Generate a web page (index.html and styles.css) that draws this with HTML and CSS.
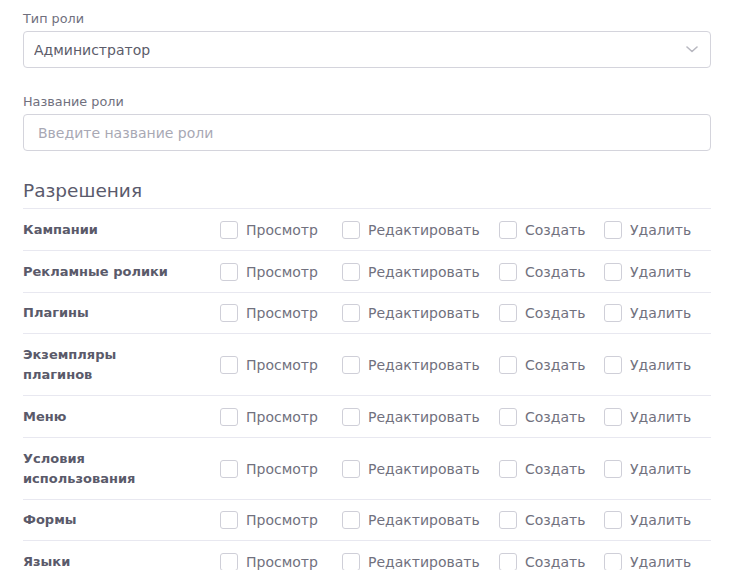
FILE: index.html
```html
<!DOCTYPE html>
<html lang="ru">
<head>
    <meta charset="UTF-8">
    <meta name="viewport" content="width=device-width, initial-scale=1.0">
    <title>Роль</title>
    <link rel="stylesheet" href="styles.css">
</head>
<body>
    <div class="container">
        <div class="form-group">
            <label for="roleType">Тип роли</label>
            <div class="select-wrap">
                <select id="roleType">
                    <option>Администратор</option>
                </select>
                <svg class="chevron" width="12" height="7" viewBox="0 0 12 7">
                    <path d="M1 1 L6 5.5 L11 1" fill="none" stroke="#b8b8c0" stroke-width="1.6" stroke-linecap="round" stroke-linejoin="round"/>
                </svg>
            </div>
        </div>

        <div class="form-group">
            <label for="roleName">Название роли</label>
            <input type="text" id="roleName" placeholder="Введите название роли">
        </div>

        <h2>Разрешения</h2>

        <div class="permissions" id="permissions"></div>
    </div>

    <script>
        const sections = [
            'Кампании',
            'Рекламные ролики',
            'Плагины',
            'Экземпляры плагинов',
            'Меню',
            'Условия использования',
            'Формы',
            'Языки'
        ];
        const actions = ['Просмотр', 'Редактировать', 'Создать', 'Удалить'];

        function renderPermissions() {
            const box = document.getElementById('permissions');
            sections.forEach((name, i) => {
                const row = document.createElement('div');
                row.className = 'perm-row';
                let html = `<div class="perm-name">${name}</div><div class="perm-actions">`;
                actions.forEach((action, j) => {
                    html += `
                        <label class="check">
                            <input type="checkbox" id="p-${i}-${j}">
                            <span class="box"></span>
                            <span>${action}</span>
                        </label>`;
                });
                html += '</div>';
                row.innerHTML = html;
                box.appendChild(row);
            });
        }

        renderPermissions();
    </script>
</body>
</html>
```

FILE: styles.css
```css
* {
    margin: 0;
    padding: 0;
    box-sizing: border-box;
}

body {
    font-family: "DejaVu Sans", sans-serif;
    background-color: #ffffff;
    color: #4a4a5c;
}

.container {
    width: 688px;
    margin-left: 23px;
    padding-top: 11px;
}

.form-group {
    display: flex;
    flex-direction: column;
    margin-bottom: 26px;
}

.form-group label {
    font-size: 12.8px;
    line-height: 16px;
    color: #70707e;
    margin-bottom: 4px;
}

.select-wrap {
    position: relative;
}

select,
.form-group input {
    width: 100%;
    height: 37px;
    border: 1px solid #d4d4dc;
    border-radius: 4px;
    background: #ffffff;
    font-family: inherit;
    font-size: 14px;
    color: #5c5c6a;
    padding: 0 10px;
    appearance: none;
    outline: none;
}

.form-group input {
    padding: 0 14px;
}

.form-group input::placeholder {
    color: #a8a8b4;
}

.chevron {
    position: absolute;
    right: 13px;
    top: 15px;
    pointer-events: none;
}

h2 {
    font-size: 18.5px;
    font-weight: normal;
    color: #5a5a6c;
    margin-top: 29px;
    line-height: 22px;
    padding-bottom: 6px;
}

.perm-row {
    display: grid;
    grid-template-columns: 197px 1fr;
    align-items: center;
    border-top: 1px solid #e8e8f0;
    padding: 10.75px 0 10px;
}

.perm-name {
    font-size: 13px;
    font-weight: bold;
    line-height: 20px;
    color: #5a5a6a;
    max-width: 160px;
}

.perm-actions {
    display: grid;
    grid-template-columns: 122px 157px 105px auto;
    align-items: center;
}

.check {
    display: flex;
    align-items: center;
    gap: 8px;
    font-size: 14px;
    color: #71717e;
    cursor: pointer;
}

.check input {
    display: none;
}

.check .box {
    width: 18px;
    height: 18px;
    border: 1px solid #cfcfd8;
    border-radius: 3px;
    background: #ffffff;
}
```
